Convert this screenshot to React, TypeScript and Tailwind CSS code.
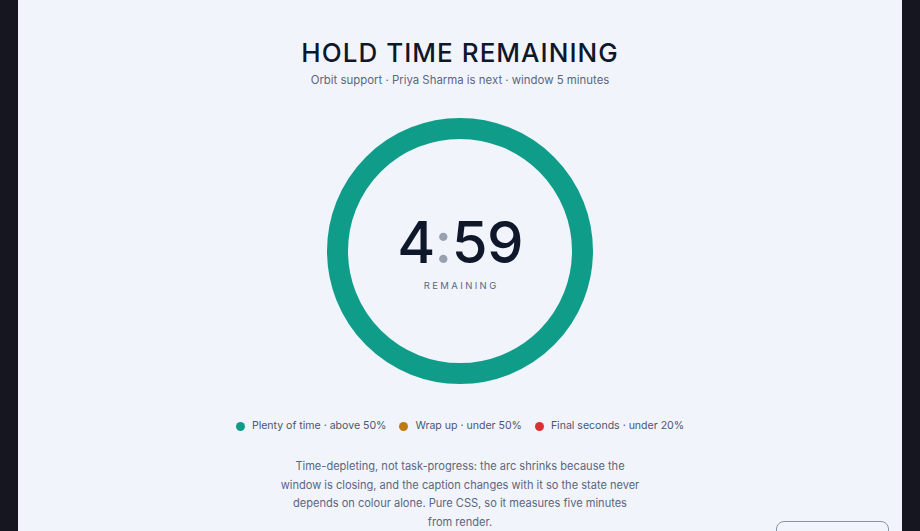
import React from 'react';

const LEGEND = [
  { color: 'bg-[#0f9d8a]', label: 'Plenty of time · above 50%' },
  { color: 'bg-[#c07a12]', label: 'Wrap up · under 50%' },
  { color: 'bg-[#dc2f34]', label: 'Final seconds · under 20%' },
];

function Ring() {
  return (
    <div className="relative w-[266px] h-[266px]">
      <svg width="266" height="266" viewBox="0 0 266 266" className="block">
        <circle cx="133" cy="133" r="122.5" fill="none" stroke="#0f9d8a" strokeWidth="21" />
      </svg>
      <div className="absolute inset-0 flex flex-col items-center justify-center">
        <div className="text-[58px] leading-none font-medium text-[#0f172a] tracking-[-0.01em] pt-[2px]">
          4<span className="text-[#9aa1ae]">:</span>59
        </div>
        <div className="mt-[9px] text-[9.5px] leading-[12px] tracking-[0.25em] text-[#5b6680] pl-[0.25em]">REMAINING</div>
      </div>
    </div>
  );
}

export default function App() {
  return (
    <div className="h-screen bg-[#15161f] px-[18px]" style={{ fontFamily: 'Inter, "Noto Sans", sans-serif' }}>
      <div className="relative h-full bg-[#f1f5fb] overflow-hidden flex flex-col items-center">
        <h1 className="mt-[37px] text-[26px] leading-[32px] font-medium tracking-[0.04em] text-[#0f172a]">
          HOLD TIME REMAINING
        </h1>
        <p className="mt-[2px] text-[11.4px] leading-[18px] text-[#5b6680]">
          Orbit support · Priya Sharma is next · window 5 minutes
        </p>

        <div className="mt-[29px]">
          <Ring />
        </div>

        <ul className="mt-[34px] flex items-center gap-[13px] text-[10.55px] leading-[16px] text-[#4b5670]">
          {LEGEND.map((l) => (
            <li key={l.label} className="flex items-center gap-[7px]">
              <span className={`w-[9px] h-[9px] rounded-full ${l.color}`} />
              {l.label}
            </li>
          ))}
        </ul>

        <p className="mt-[23px] text-center text-[11.05px] leading-[18.5px] text-[#5b6680]">
          Time-depleting, not task-progress: the arc shrinks because the
          <br />
          window is closing, and the caption changes with it so the state never
          <br />
          depends on colour alone. Pure CSS, so it measures five minutes
          <br />
          from render.
        </p>

        <button
          aria-label="Restart"
          className="absolute left-[758px] top-[521px] w-[113px] h-[40px] rounded-[8px] border border-[#8b93a7] bg-[#f1f5fb]"
        />
      </div>
    </div>
  );
}
